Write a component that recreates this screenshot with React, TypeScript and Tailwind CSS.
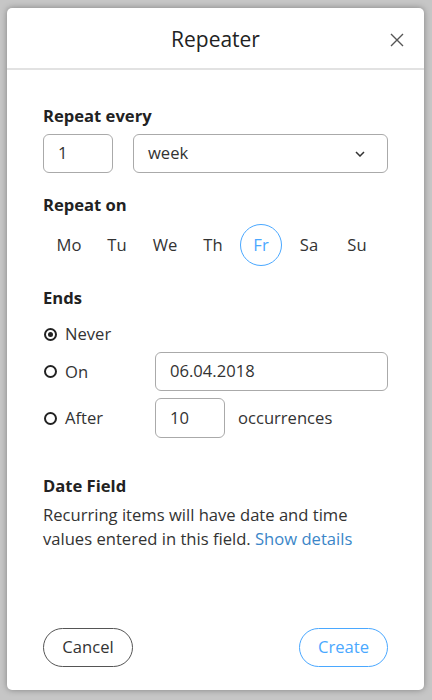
import React from "react";

const font = { fontFamily: '"Open Sans", "Noto Sans", Arial, sans-serif' };

function Radio({ checked, label }: { checked?: boolean; label: string }) {
  return (
    <div className="flex items-center w-[112px]">
      <span className="ml-[1px] w-[13px] h-[13px] rounded-full border-2 border-[#222] flex items-center justify-center">
        {checked && <span className="w-[5px] h-[5px] rounded-full bg-[#222]" />}
      </span>
      <span className="ml-[8px] text-[16.6px] leading-[24px] text-[#333]">{label}</span>
    </div>
  );
}

export default function App() {
  const days = ["Mo", "Tu", "We", "Th", "Fr", "Sa", "Su"];
  return (
    <div className="w-[432px] h-[700px] bg-[#c6c6c6] pt-[8px] pl-[7px]" style={font}>
      <div className="w-[417px] h-[682px] bg-white rounded-[5px] shadow-[0_0_6px_rgba(0,0,0,0.35)] flex flex-col">
        <div className="h-[62px] border-b-2 border-[#e2e2e2] flex items-center justify-center relative">
          <span className="text-[21px] text-[#222] leading-[28px] mt-[1px]">Repeater</span>
          <svg className="absolute left-[383px] top-[25px]" width="14" height="14" viewBox="0 0 14 14">
            <path d="M1 1 L13 13 M13 1 L1 13" stroke="#555" strokeWidth="1.4" fill="none" />
          </svg>
        </div>
        <div className="flex-1 flex flex-col px-[36px] text-[#333] text-[16.6px]">
          <div className="mt-[34px] leading-[24px] font-bold text-[#222]">Repeat every</div>
          <div className="mt-[6px] flex gap-[20px]">
            <div className="w-[70px] h-[39px] border border-[#aaa] rounded-[6px] flex items-center px-[14px]">1</div>
            <div className="flex-1 h-[39px] border border-[#aaa] rounded-[6px] flex items-center justify-between pl-[14px] pr-[22px]">
              <span>week</span>
              <svg width="10" height="6" viewBox="0 0 10 6">
                <path d="M1 1 L5 5 L9 1" stroke="#333" strokeWidth="1.5" fill="none" />
              </svg>
            </div>
          </div>
          <div className="mt-[20px] leading-[24px] font-bold text-[#222]">Repeat on</div>
          <div className="mt-[7px] ml-[5px] flex gap-[6px]">
            {days.map((d) => (
              <div
                key={d}
                className={
                  d === "Fr"
                    ? "w-[42px] h-[42px] rounded-full border-[1.5px] border-[#4aa8ff] text-[#4aa8ff] flex items-center justify-center"
                    : "w-[42px] h-[42px] rounded-full flex items-center justify-center text-[#333]"
                }
              >
                {d}
              </div>
            ))}
          </div>
          <div className="mt-[20px] leading-[24px] font-bold text-[#222]">Ends</div>
          <div className="mt-[12px]">
            <Radio checked label="Never" />
          </div>
          <div className="mt-[6px] flex items-center">
            <Radio label="On" />
            <div className="flex-1 h-[39px] border border-[#aaa] rounded-[6px] flex items-center px-[14px]">06.04.2018</div>
          </div>
          <div className="mt-[7px] flex items-center">
            <Radio label="After" />
            <div className="w-[70px] h-[40px] border border-[#aaa] rounded-[6px] flex items-center px-[14px]">10</div>
            <span className="ml-[13px]">occurrences</span>
          </div>
          <div className="mt-[36px] leading-[24px] font-bold text-[#222]">Date Field</div>
          <p className="mt-[5px] leading-[24px] text-[#333]">
            Recurring items will have date and time values entered in this field.{" "}
            <span className="text-[#3b86c8]">Show details</span>
          </p>
          <div className="mt-auto mb-[23px] flex justify-between">
            <div className="w-[90px] h-[39px] rounded-full border-[1.5px] border-[#555] flex items-center justify-center text-[#333]">Cancel</div>
            <div className="w-[89px] h-[39px] rounded-full border-[1.5px] border-[#4aa8ff] flex items-center justify-center text-[#4aa8ff]">Create</div>
          </div>
        </div>
      </div>
    </div>
  );
}
